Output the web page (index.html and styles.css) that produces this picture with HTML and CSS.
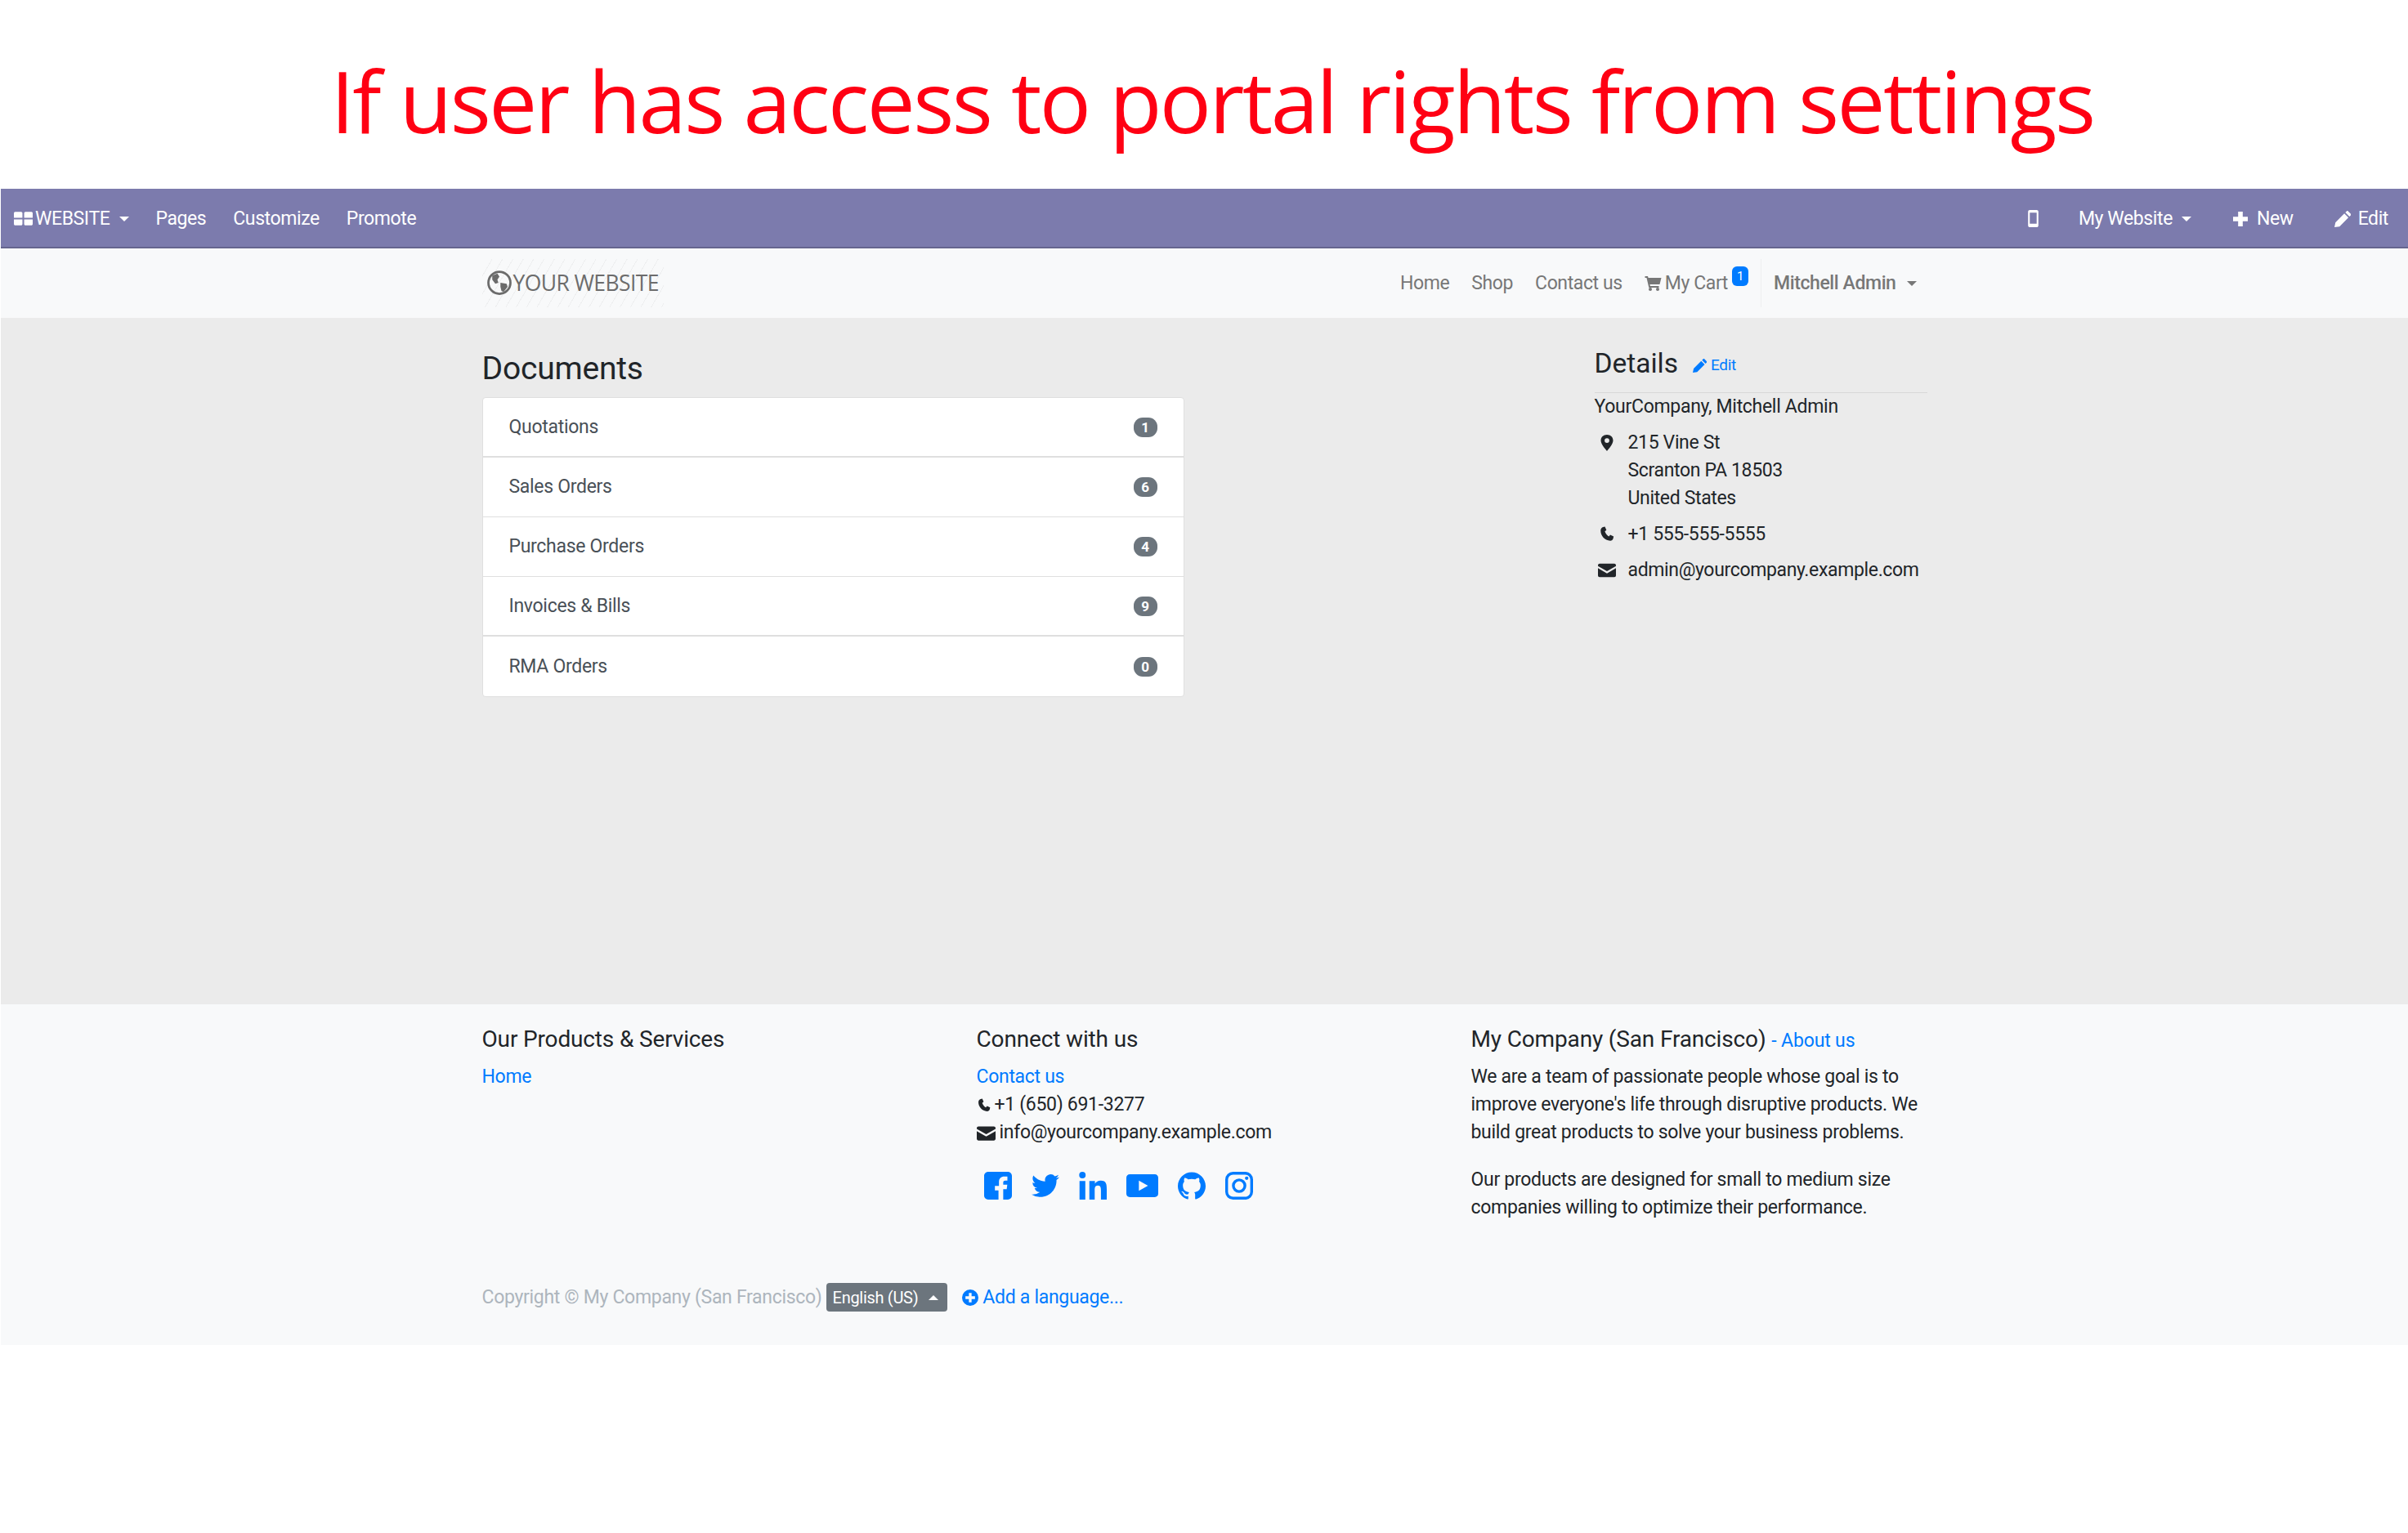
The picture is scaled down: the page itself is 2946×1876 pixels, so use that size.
FILE: index.html
```html
<!DOCTYPE html>
<html>
<head>
    <title>My Portal - My Website</title>
    <link rel="stylesheet" href="styles.css">
</head>
<body>
    <svg class="icon-defs" width="0" height="0">
        <symbol id="i-phone" viewBox="0 0 24 24"><path d="M6.2 1.2 9 .6l2.2 5-2.3 2c.9 2.7 3 5.700 5.900 7.300l2-2.300 5 2.300-.7 3c-.4 1.800-2.300 3.500-4.300 3.400C8.500 20.700 2.600 13.800 2.700 6c0-2.200 1.700-4.300 3.500-4.800z"/></symbol>
        <symbol id="i-mail" viewBox="0 0 24 18"><path d="M0 2.200C0 1 1 0 2.200 0h19.600C23 0 24 1 24 2.200v1L12 10 0 3.200z"/><path d="M0 6l12 7 12-7v9.800c0 1.200-1 2.200-2.200 2.200H2.200C1 18 0 17 0 15.800z"/></symbol>
        <symbol id="i-pencil" viewBox="0 0 24 24"><path d="M0 24l1.500-7L14.500 4l6 6L7.500 23zM16 2.500 18 .5c.6-.6 1.400-.6 2 0l4 4c.6.600.6 1.400 0 2l-2 2z"/></symbol>
    </svg>

    <div class="banner">If user has access to portal rights from settings</div>

    <div class="admin-bar">
        <div class="admin-left">
            <span class="admin-brand">
                <svg class="grid-icon" viewBox="0 0 22 16"><path d="M0 1.500C0 .7.700 0 1.500 0h7C9.300 0 10 .7 10 1.500V7H0zM12 1.500c0-.8.7-1.500 1.500-1.500h7c.8 0 1.500.7 1.500 1.500V7H12zM0 9h10v5.500c0 .8-.7 1.500-1.500 1.500h-7C.7 16 0 15.300 0 14.500zM12 9h10v5.500c0 .8-.7 1.500-1.500 1.500h-7c-.8 0-1.500-.7-1.500-1.500z"/></svg>
                WEBSITE<span class="caret"></span>
            </span>
            <a class="admin-link">Pages</a>
            <a class="admin-link">Customize</a>
            <a class="admin-link">Promote</a>
        </div>
        <div class="admin-right">
            <svg class="mobile-icon" viewBox="0 0 12 20"><path fill-rule="evenodd" d="M2 0h8c1.100 0 2 .9 2 2v16c0 1.100-.9 2-2 2H2c-1.100 0-2-.9-2-2V2C0 .9.900 0 2 0zm0 3v13h8V3z"/></svg>
            <a class="admin-link site-switch">My Website<span class="caret"></span></a>
            <a class="admin-link new-link"><svg class="plus-icon" viewBox="0 0 16 16"><path d="M5.500 0h5v5.500H16v5h-5.500V16h-5v-5.500H0v-5h5.500z"/></svg>New</a>
            <a class="admin-link edit-link"><svg class="edit-icon"><use href="#i-pencil"/></svg>Edit</a>
        </div>
    </div>

    <div class="site-nav">
        <div class="container nav-inner">
            <div class="logo">
                <svg class="globe" viewBox="0 0 24 24"><circle cx="12" cy="12" r="10.800" fill="none" stroke="#6b6b6b" stroke-width="2.200"/><path fill="#6b6b6b" d="M5 5l5-2 2 3-2 3 1 3-3 1-3-4zM13 12l6 1 1 3-4 5-2-1-1-4z"/></svg>
                <span>YOUR WEBSITE</span>
            </div>
            <div class="nav-links">
                <a>Home</a>
                <a>Shop</a>
                <a>Contact us</a>
                <a class="cart-link"><svg class="cart-icon" viewBox="0 0 20 18"><path d="M0 0h3.500l.6 2H20l-2 8H6l.4 2H17v2H4.800L2 2H0z"/><circle cx="6.500" cy="16" r="2"/><circle cx="15.500" cy="16" r="2"/></svg>My Cart<sup class="cart-count">1</sup></a>
                <span class="nav-divider"></span>
                <a class="user-link">Mitchell Admin<span class="caret"></span></a>
            </div>
        </div>
    </div>

    <div class="main">
        <div class="container main-row">
            <div class="documents">
                <h3 class="page-title">Documents</h3>
                <div class="doc-list">
                    <div class="doc-row"><span>Quotations</span><span class="pill">1</span></div>
                    <div class="doc-row"><span>Sales Orders</span><span class="pill">6</span></div>
                    <div class="doc-row"><span>Purchase Orders</span><span class="pill">4</span></div>
                    <div class="doc-row"><span>Invoices &amp; Bills</span><span class="pill">9</span></div>
                    <div class="doc-row"><span>RMA Orders</span><span class="pill">0</span></div>
                </div>
            </div>
            <div class="details">
                <div class="details-head">
                    <span class="details-title">Details</span>
                    <a class="details-edit"><svg class="edit-small"><use href="#i-pencil"/></svg>Edit</a>
                </div>
                <div class="details-name">YourCompany, Mitchell Admin</div>
                <div class="contact-row">
                    <svg class="contact-icon" viewBox="0 0 24 24"><path fill-rule="evenodd" d="M12 0c5.500 0 9 3.800 9 8.500 0 5-5.500 11.500-9 15.500C8.500 20 3 13.500 3 8.500 3 3.800 6.500 0 12 0zm0 5a3.500 3.500 0 100 7 3.500 3.500 0 000-7z"/></svg>
                    <div>215 Vine St<br>Scranton PA 18503<br>United States</div>
                </div>
                <div class="contact-row">
                    <svg class="contact-icon"><use href="#i-phone"/></svg>
                    <div>+1 555-555-5555</div>
                </div>
                <div class="contact-row">
                    <svg class="contact-icon"><use href="#i-mail"/></svg>
                    <div>admin@yourcompany.example.com</div>
                </div>
            </div>
        </div>
    </div>

    <div class="footer">
        <div class="container">
            <div class="footer-cols">
                <div class="footer-col">
                    <h5>Our Products &amp; Services</h5>
                    <a class="link">Home</a>
                </div>
                <div class="footer-col">
                    <h5>Connect with us</h5>
                    <a class="link">Contact us</a>
                    <div><svg class="inline-icon phone-small"><use href="#i-phone"/></svg>+1 (650) 691-3277</div>
                    <div><svg class="inline-icon mail-small"><use href="#i-mail"/></svg>info@yourcompany.example.com</div>
                    <div class="social">
                        <svg viewBox="0 0 24 24"><path d="M3.500 0h17C22.400 0 24 1.600 24 3.500v17c0 1.900-1.600 3.500-3.500 3.500H16.500v-9h3l.5-3.800h-3.500V9.300c0-1.100.3-1.800 1.800-1.800h1.800V4.100c-.4 0-1.500-.1-2.700-.1-2.800 0-4.600 1.700-4.600 4.700v3.500H9.300V16h3.100v8H3.500C1.600 24 0 22.400 0 20.500v-17C0 1.600 1.600 0 3.500 0z"/></svg>
                        <svg viewBox="0 0 24 24"><path d="M23.953 4.570a10 10 0 01-2.825.775 4.958 4.958 0 002.163-2.723c-.951.555-2.005.959-3.127 1.184a4.920 4.920 0 00-8.384 4.482C7.690 8.095 4.067 6.130 1.640 3.162a4.822 4.822 0 00-.666 2.475c0 1.710.870 3.213 2.188 4.096a4.904 4.904 0 01-2.228-.616v.060a4.923 4.923 0 003.946 4.827 4.996 4.996 0 01-2.212.085 4.936 4.936 0 004.604 3.417 9.867 9.867 0 01-6.102 2.105c-.390 0-.779-.023-1.170-.067a13.995 13.995 0 007.557 2.209c9.053 0 13.998-7.496 13.998-13.985 0-.210 0-.420-.015-.630A9.935 9.935 0 0024 4.590z"/></svg>
                        <svg viewBox="0 0 24 24"><path d="M.5 8h5v16h-5zM3 0a2.800 2.800 0 110 5.600A2.800 2.800 0 013 0zM9 8h4.800v2.200C14.500 9 16.300 7.600 18.800 7.600c5 0 5.200 3.500 5.200 7.600V24h-5v-7.800c0-2-.1-4.300-2.600-4.300-2.600 0-2.800 2-2.800 4.200V24H9z"/></svg>
                        <svg class="yt" viewBox="0 0 28 20"><path fill-rule="evenodd" d="M3 0h22c1.700 0 3 1.300 3 3v14c0 1.700-1.300 3-3 3H3c-1.700 0-3-1.300-3-3V3C0 1.300 1.300 0 3 0zm8 5.500v9l8-4.500z"/></svg>
                        <svg viewBox="0 0 24 24"><path d="M12 .297c-6.630 0-12 5.373-12 12 0 5.303 3.438 9.800 8.205 11.385.6.113.82-.258.82-.577 0-.285-.01-1.040-.015-2.040-3.338.724-4.042-1.610-4.042-1.610C4.422 18.070 3.633 17.700 3.633 17.700c-1.087-.744.084-.729.084-.729 1.205.084 1.838 1.236 1.838 1.236 1.070 1.835 2.809 1.305 3.495.998.108-.776.417-1.305.76-1.605-2.665-.3-5.466-1.332-5.466-5.930 0-1.310.465-2.380 1.235-3.220-.135-.303-.54-1.523.105-3.176 0 0 1.005-.322 3.300 1.230.96-.267 1.980-.399 3-.405 1.020.006 2.040.138 3 .405 2.280-1.552 3.285-1.230 3.285-1.230.645 1.653.24 2.873.12 3.176.765.84 1.230 1.910 1.230 3.220 0 4.610-2.805 5.625-5.475 5.920.42.36.81 1.096.81 2.220 0 1.606-.015 2.896-.015 3.286 0 .315.21.69.825.57C20.565 22.092 24 17.592 24 12.297c0-6.627-5.373-12-12-12"/></svg>
                        <svg viewBox="0 0 24 24"><rect x="1.200" y="1.200" width="21.600" height="21.600" rx="5.500" fill="none" stroke="currentColor" stroke-width="2.400"/><circle cx="12" cy="12" r="5" fill="none" stroke="currentColor" stroke-width="2.400"/><circle cx="18.500" cy="5.500" r="1.500"/></svg>
                    </div>
                </div>
                <div class="footer-col company">
                    <h5>My Company (San Francisco) <a class="about-link">- About us</a></h5>
                    <p>We are a team of passionate people whose goal is to improve everyone's life through disruptive products. We build great products to solve your business problems.</p>
                    <p>Our products are designed for small to medium size companies willing to optimize their performance.</p>
                </div>
            </div>
            <div class="copyright">
                <span class="copy-text">Copyright &copy; My Company (San Francisco)</span>
                <span class="lang-btn">English (US)<span class="caret caret-up"></span></span>
                <a class="link add-lang"><svg class="plus-circle" viewBox="0 0 24 24"><path fill-rule="evenodd" d="M12 0a12 12 0 110 24 12 12 0 010-24zm-2 5v5H5v4h5v5h4v-5h5v-4h-5V5z"/></svg>Add a language...</a>
            </div>
        </div>
    </div>
</body>
</html>
```

FILE: styles.css
```css
* {
    box-sizing: border-box;
}
body {
    margin: 0;
    background-color: #fff;
    font-family: Roboto, sans-serif;
    font-size: 23px;
    line-height: 34px;
    letter-spacing: -.3px;
    color: #212529;
}
a {
    text-decoration: none;
}
.icon-defs {
    position: absolute;
}
.container {
    width: 1768px;
    margin: 0 auto;
}
.caret {
    display: inline-block;
    margin-left: 13px;
    vertical-align: 4px;
    border-top: 6px solid currentColor;
    border-left: 6px solid transparent;
    border-right: 6px solid transparent;
}
.caret-up {
    border-top: 0;
    border-bottom: 6px solid currentColor;
}

.banner {
    height: 231px;
    display: flex;
    align-items: center;
    justify-content: center;
    padding: 15px 0 0 20px;
    font-family: "Open Sans", sans-serif;
    font-size: 105px;
    letter-spacing: -2.550px;
    color: #ff0013;
}

.admin-bar {
    height: 73px;
    margin-left: 1px;
    padding: 2px 24px 0 16px;
    display: flex;
    justify-content: space-between;
    align-items: center;
    background-color: #7c7bad;
    border-bottom: 2px solid #66658f;
    color: #fff;
    font-size: 23px;
    letter-spacing: -.4px;
}
.admin-left, .admin-right {
    display: flex;
    align-items: center;
}
.admin-brand {
    margin-right: 32px;
    display: flex;
    align-items: center;
}
.admin-brand .caret {
    margin-left: 12px;
    vertical-align: 0;
}
.grid-icon {
    width: 23px;
    height: 17px;
    margin-right: 3px;
    fill: #fff;
}
.admin-link {
    margin-right: 33px;
    color: #fff;
    display: flex;
    align-items: center;
}
.admin-right .admin-link {
    margin-right: 0;
}
.mobile-icon {
    width: 13px;
    height: 21px;
    margin-right: 49px;
    fill: #fff;
}
.site-switch .caret {
    margin-left: 11px;
}
.new-link {
    margin-left: 51px;
}
.plus-icon {
    width: 18px;
    height: 18px;
    margin-right: 11px;
    fill: #fff;
}
.edit-link {
    margin-left: 50px;
}
.edit-icon {
    width: 20px;
    height: 20px;
    margin-right: 9px;
    fill: #fff;
}

.site-nav {
    height: 85px;
    margin-left: 1px;
    background-color: #f8f9fa;
}
.nav-inner {
    height: 85px;
    display: flex;
    justify-content: space-between;
    align-items: center;
}
.logo {
    width: 222px;
    height: 59px;
    padding: 0 0 2px 6px;
    display: flex;
    align-items: center;
    gap: 2px;
    background: repeating-linear-gradient(120deg, transparent 0 10px, #eeeff0 10px 11px);
    font-family: "Open Sans", sans-serif;
    font-size: 26.500px;
    letter-spacing: -.6px;
    white-space: nowrap;
    color: #6c6c6c;
}
.globe {
    width: 30px;
    height: 30px;
    flex: none;
}
.nav-links {
    display: flex;
    align-items: center;
    margin-right: 13px;
    color: #777;
    letter-spacing: -.4px;
}
.nav-links a {
    margin-right: 27px;
    color: #777;
    display: flex;
    align-items: center;
}
.nav-links .cart-link {
    margin-right: 0;
}
.cart-icon {
    width: 21px;
    height: 18px;
    margin-right: 4px;
    fill: #777;
}
.cart-count {
    margin: -17px 0 0 5px;
    padding: 0 6px;
    height: 24px;
    border-radius: 6px;
    background-color: #007bff;
    color: #fff;
    font-size: 15px;
    line-height: 24px;
}
.nav-divider {
    width: 1px;
    height: 59px;
    margin: 0 15px 0 15px;
    background-color: #eeeff0;
}
.nav-links .user-link {
    margin-right: 0;
    font-weight: 500;
}
.user-link .caret {
    margin-left: 13px;
}

.main {
    height: 840px;
    margin-left: 1px;
    background-color: #ebebeb;
}
.main-row {
    display: flex;
    justify-content: space-between;
}
.documents {
    width: 859px;
}
.page-title {
    margin: 39px 0 0;
    font-size: 39px;
    font-weight: 400;
    line-height: 46px;
    letter-spacing: -.2px;
}
.doc-list {
    margin-top: 12px;
    background-color: #fff;
    border: 1px solid #dfdfdf;
    border-radius: 4px;
}
.doc-row {
    height: 73px;
    padding: 0 32px;
    display: flex;
    justify-content: space-between;
    align-items: center;
    border-bottom: 1px solid #dfdfdf;
    color: #495057;
}
.doc-row:first-child, .doc-row:nth-child(4) {
    border-bottom-width: 2px;
}
.doc-row:last-child {
    border-bottom: 0;
}
.pill {
    width: 29px;
    height: 24px;
    border-radius: 11px;
    background-color: #6c757d;
    color: #fff;
    font-size: 17px;
    font-weight: 700;
    line-height: 24px;
    text-align: center;
}
.details {
    width: 407px;
}
.details-head {
    margin-top: 34px;
    height: 58px;
    border-bottom: 1px solid #d8d8d8;
    display: flex;
    align-items: flex-start;
}
.details-title {
    font-size: 33.500px;
    line-height: 44px;
    letter-spacing: 0;
}
.details-edit {
    margin: 7px 0 0 18px;
    color: #007bff;
    font-size: 19px;
    display: flex;
    align-items: center;
}
.edit-small {
    width: 17px;
    height: 17px;
    margin-right: 5px;
    fill: #007bff;
}
.details-name {
    margin-bottom: 10px;
}
.contact-row {
    display: flex;
    margin-bottom: 10px;
    letter-spacing: -.35px;
}
.contact-row > div {
    flex: 1;
}
.contact-icon {
    width: 22px;
    height: 20px;
    margin: 7px 15px 0 4px;
    fill: #212529;
}

.footer {
    height: 417px;
    margin-left: 1px;
    background-color: #f8f9fa;
}
.footer-cols {
    display: flex;
    padding-top: 26px;
}
.footer-col {
    width: 605px;
}
.footer-col h5 {
    margin: 0 0 12px;
    font-size: 28px;
    font-weight: 400;
    line-height: 34px;
    letter-spacing: -.15px;
}
.company {
    width: 558px;
    padding-right: 10px;
}
.footer-col.company h5 {
    margin-bottom: 10px;
}
.company p {
    margin: 0 0 24px;
}
.about-link {
    color: #007bff;
    font-size: 23px;
}
.link {
    color: #007bff;
}
.inline-icon {
    fill: #212529;
    vertical-align: -3px;
}
.phone-small {
    width: 18px;
    height: 18px;
    margin-right: 4px;
}
.mail-small {
    width: 23px;
    height: 18px;
    margin-right: 5px;
}
.social {
    margin: 31px 0 0 9px;
    display: flex;
    gap: 24px;
    color: #007bff;
}
.social svg {
    width: 34px;
    height: 34px;
    fill: #007bff;
}
.social .yt {
    width: 39px;
}
.copyright {
    margin-top: 51px;
    display: flex;
    align-items: center;
}
.copy-text {
    color: #adb5bd;
}
.lang-btn {
    margin-left: 5px;
    padding: 0 11px 0 8px;
    height: 35px;
    display: flex;
    align-items: center;
    border-radius: 4px;
    background-color: #6c757d;
    color: #fff;
    font-size: 20px;
}
.add-lang {
    margin-left: 18px;
    display: flex;
    align-items: center;
}
.plus-circle {
    width: 20px;
    height: 20px;
    margin-right: 5px;
    fill: #007bff;
}
```
